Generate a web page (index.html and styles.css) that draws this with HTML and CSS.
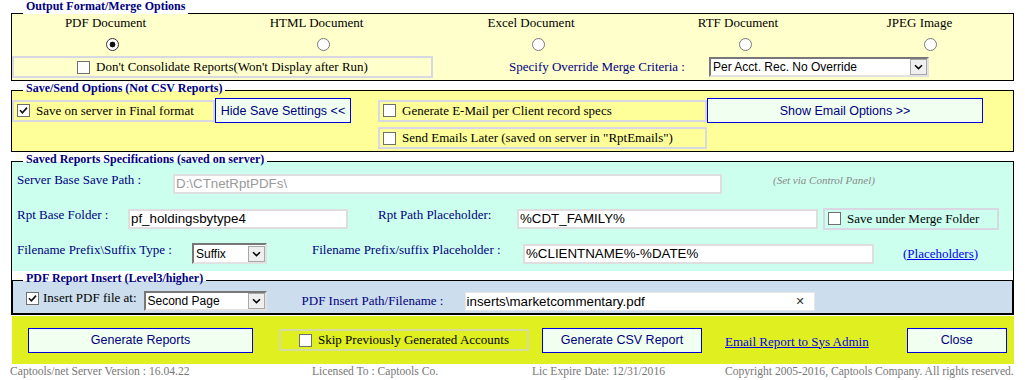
FILE: index.html
```html
<!DOCTYPE html>
<html lang="en">
<head>
  <meta charset="UTF-8">
  <meta name="viewport" content="width=device-width, initial-scale=1.0">
  <title>Report Output Options</title>
  <link rel="stylesheet" href="styles.css">
</head>
<body>

  <div class="page">

    <!-- Output Format / Merge -->
    <div class="group group-first">
      <div class="group-head"><span class="head-text">Output Format/Merge Options</span></div>
      <div class="group-body body-output">
        <div class="formats">
          <label class="fmt"><span>PDF Document</span><input type="radio" name="fmt" class="radio" checked></label>
          <label class="fmt"><span>HTML Document</span><input type="radio" name="fmt" class="radio"></label>
          <label class="fmt"><span>Excel Document</span><input type="radio" name="fmt" class="radio"></label>
          <label class="fmt"><span>RTF Document</span><input type="radio" name="fmt" class="radio"></label>
          <label class="fmt fmt-last"><span>JPEG Image</span><input type="radio" name="fmt" class="radio"></label>
        </div>
        <div class="merge-row">
          <label class="chk-box box-consolidate"><input type="checkbox" class="chk"> Don't Consolidate Reports(Won't Display after Run)</label>
          <span class="lbl merge-lbl">Specify Override Merge Criteria :</span>
          <select class="sel sel-merge">
            <option>Per Acct. Rec. No Override</option>
          </select>
        </div>
      </div>
    </div>

    <!-- Save / Send -->
    <div class="group">
      <div class="group-head"><span class="head-text">Save/Send Options (Not CSV Reports)</span></div>
      <div class="group-body body-save">
        <label class="chk-box save-final"><input type="checkbox" class="chk" checked> Save on server in Final format</label>
        <button type="button" class="btn btn-hide">Hide Save Settings &lt;&lt;</button>
        <label class="chk-box gen-mail"><input type="checkbox" class="chk"> Generate E-Mail per Client record specs</label>
        <button type="button" class="btn btn-show">Show Email Options &gt;&gt;</button>
        <label class="chk-box send-later"><input type="checkbox" class="chk"> Send Emails Later (saved on server in "RptEmails")</label>
      </div>
    </div>

    <!-- Saved Reports Specifications -->
    <div class="group">
      <div class="group-head"><span class="head-text">Saved Reports Specifications (saved on server)</span></div>
      <div class="group-body body-specs">
        <div class="specs">
          <div class="spec-row">
            <span class="lbl w-base">Server Base Save Path :</span>
            <input type="text" class="txt w-path" value="D:\CTnetRptPDFs\" disabled>
            <span class="note">(Set via Control Panel)</span>
          </div>
          <div class="spec-row">
            <span class="lbl w-folder">Rpt Base Folder :</span>
            <input type="text" class="txt w-folder-in" value="pf_holdingsbytype4">
            <span class="lbl w-ph">Rpt Path Placeholder:</span>
            <input type="text" class="txt w-ph-in" value="%CDT_FAMILY%">
            <label class="chk-box merge-folder"><input type="checkbox" class="chk"> Save under Merge Folder</label>
          </div>
          <div class="spec-row">
            <span class="lbl w-type">Filename Prefix\Suffix Type :</span>
            <select class="sel sel-suffix">
              <option>Suffix</option>
              <option>Prefix</option>
            </select>
            <span class="lbl w-fph">Filename Prefix/suffix Placeholder :</span>
            <input type="text" class="txt w-fph-in" value="%CLIENTNAME%-%DATE%">
            <a href="#" class="link ph-link">(Placeholders)</a>
          </div>
        </div>

        <!-- PDF insert -->
        <div class="group group-inner">
          <div class="group-head"><span class="head-text">PDF Report Insert (Level3/higher)</span></div>
          <div class="group-body body-pdf">
            <label class="pdf-chk"><input type="checkbox" class="chk" checked> Insert PDF file at:</label>
            <select class="sel sel-page">
              <option>Second Page</option>
              <option>First Page</option>
              <option>Last Page</option>
            </select>
            <span class="lbl w-insert">PDF Insert Path/Filename :</span>
            <div class="clear-field">
              <input type="text" class="clear-input" value="inserts\marketcommentary.pdf">
              <span class="clear-x">&#x2715;</span>
            </div>
          </div>
        </div>
      </div>
    </div>

    <!-- Actions -->
    <div class="actions">
      <button type="button" class="btn btn-gen">Generate Reports</button>
      <label class="chk-box skip-box"><input type="checkbox" class="chk"> Skip Previously Generated Accounts</label>
      <button type="button" class="btn btn-csv">Generate CSV Report</button>
      <a href="#" class="link mail-link">Email Report to Sys Admin</a>
      <button type="button" class="btn btn-close">Close</button>
    </div>
  </div>

  <div class="footer">
    <span>Captools/net Server Version : 16.04.22</span>
    <span>Licensed To : Captools Co.</span>
    <span>Lic Expire Date: 12/31/2016</span>
    <span>Copyright 2005-2016, Captools Company. All rights reserved.</span>
  </div>

</body>
</html>
```

FILE: styles.css
```css
body {
  margin: 0;
  background: #fff;
  color: #000;
  font-family: "Liberation Serif", serif;
  font-size: 13px;
}

.page {
  margin-left: 11px;
  width: 1003px;
}

/* fieldset-like groups */
.group-head {
  display: flex;
  align-items: flex-end;
  position: relative;
}
.group-head::before {
  content: "";
  flex: none;
  width: 12px;
  border-bottom: 1px solid #000;
}
.group-head::after {
  content: "";
  flex: 1;
  border-bottom: 1px solid #000;
}
.head-text {
  font: bold 12px/14px "Liberation Serif", serif;
  color: #000080;
  padding: 0 3px;
  margin-bottom: -4px;
  white-space: nowrap;
}
.group-first .head-text {
  margin-bottom: 1px;
}
.group-first .group-head {
  margin-top: -1px;
}
.group-body {
  border: 1px solid #000;
  border-top: none;
}

.lbl {
  color: #000080;
  line-height: 16px;
  white-space: nowrap;
}

/* custom controls */
.chk {
  appearance: none;
  flex: none;
  width: 13px;
  height: 13px;
  margin: 0;
  border: 1px solid #6f6f6f;
  background: #fff;
}
.chk:checked {
  background: #fff url("data:image/svg+xml,%3Csvg xmlns='http://www.w3.org/2000/svg' width='11' height='11'%3E%3Cpath d='M2 5.2l2.4 2.6L9 2.6' fill='none' stroke='%23111' stroke-width='1.6'/%3E%3C/svg%3E") no-repeat center;
}
.radio {
  appearance: none;
  width: 13px;
  height: 13px;
  margin: 8px 0 0 14px;
  border: 1px solid #7a7a7a;
  border-radius: 50%;
  background: #fff;
}
.radio:checked {
  border-color: #333;
  background: radial-gradient(circle, #111 0 2.6px, #fff 3.2px);
}

.chk-box {
  display: flex;
  align-items: center;
  gap: 6px;
  height: 22px;
  box-sizing: border-box;
  padding-left: 3px;
  border: 2px solid #d8d8e2;
  line-height: 16px;
  white-space: nowrap;
}

.sel {
  appearance: none;
  box-sizing: border-box;
  height: 20px;
  margin: 0;
  padding: 0 0 0 2px;
  font: 12px "Liberation Sans", Arial, sans-serif;
  color: #000;
  border: 2px solid;
  border-color: #777 #e2e2e2 #e2e2e2 #777;
  border-radius: 0;
  background: #fff url("data:image/svg+xml,%3Csvg xmlns='http://www.w3.org/2000/svg' width='17' height='16'%3E%3Crect x='0.5' y='0.5' width='16' height='15' fill='%23efefef' stroke='%23a8a8a8'/%3E%3Cpath d='M5 6.2l3.5 3.4L12 6.2' fill='none' stroke='%23000' stroke-width='1.5'/%3E%3C/svg%3E") no-repeat right 0 center;
}

.txt {
  box-sizing: border-box;
  height: 20px;
  margin: 0;
  padding: 0 1px;
  font: 13.33px "Liberation Sans", Arial, sans-serif;
  color: #000;
  background: #fff;
  border: 2px solid #dedede;
}
.txt:disabled {
  color: #9a9a9a;
  background: #fff;
}

.btn {
  box-sizing: border-box;
  height: 25px;
  margin: 0;
  padding: 0;
  font: 12.5px "Liberation Sans", Arial, sans-serif;
  color: #000080;
  background: #f0fff0;
  border: 1px solid #0000dd;
  cursor: pointer;
}

.link {
  color: #0000ee;
  text-decoration: underline;
  white-space: nowrap;
}

/* output format section */
.body-output {
  background: #ffffcc;
  padding-bottom: 2px;
}
.formats {
  display: grid;
  grid-template-columns: 187px 235px 194px 220px 143px;
  padding-top: 1px;
}
.fmt {
  display: flex;
  flex-direction: column;
  align-items: center;
  line-height: 16px;
}
.fmt .radio {
  margin-top: 7px;
}
.fmt-last .radio {
  margin-left: 21px;
}
.merge-row {
  display: flex;
  align-items: center;
  margin-top: 5px;
}
.box-consolidate {
  width: 421px;
  justify-content: center;
  padding-left: 0;
}
.merge-lbl {
  width: 200px;
  margin-left: 76px;
}
.sel-merge {
  width: 220px;
}

/* save/send section */
.body-save {
  background: #ffff99;
  display: grid;
  grid-template-columns: 203px 136px 27px 329px 276px;
  grid-template-rows: 25px 22px;
  row-gap: 4px;
  align-items: center;
  padding: 7px 0 2px;
}
.save-final { grid-column: 1; grid-row: 1; }
.btn-hide { grid-column: 2; grid-row: 1; }
.gen-mail { grid-column: 4; grid-row: 1; }
.btn-show { grid-column: 5; grid-row: 1; }
.send-later { grid-column: 4; grid-row: 2; }

/* saved reports section */
.body-specs {
  background: #fff;
}
.specs {
  background: #ccffee;
  padding-top: 4px;
}
.spec-row {
  display: flex;
  align-items: center;
  height: 35px;
  padding-left: 5px;
}
.spec-row .lbl {
  margin-bottom: 7px;
}
.w-base { width: 156px; }
.w-path { width: 549px; }
.note {
  margin: 0 0 8px 51px;
  font-size: 11px;
  line-height: 14px;
  font-style: italic;
  color: #8a8a8a;
}
.w-folder { width: 111px; }
.w-folder-in { width: 220px; }
.w-ph { width: 139px; margin-left: 30px; }
.w-ph-in { width: 301px; }
.merge-folder {
  width: 176px;
  margin-left: 5px;
}
.w-type { width: 175px; }
.sel-suffix {
  width: 75px;
  height: 21px;
}
.w-fph { width: 211px; margin-left: 45px; }
.w-fph-in { width: 351px; }
.ph-link { margin-left: 29px; }

/* pdf insert */
.group-inner .group-head::before {
  width: 11px;
}
.body-pdf {
  display: flex;
  align-items: center;
  box-sizing: border-box;
  height: 33px;
  padding: 8px 0 0 13px;
  background: #ccdded;
}
.pdf-chk {
  display: flex;
  align-items: center;
  gap: 4px;
  line-height: 16px;
  margin-bottom: 6px;
}
.sel-page {
  width: 123px;
  margin-left: 7px;
}
.w-insert {
  width: 163px;
  margin-left: 35px;
}
.clear-field {
  display: flex;
  align-items: center;
  box-sizing: border-box;
  width: 350px;
  height: 19px;
  background: #fff;
  border: 1px solid #e6e6e6;
}
.clear-input {
  flex: 1;
  min-width: 0;
  border: none;
  outline: none;
  padding: 0 1px;
  font: 13.33px "Liberation Sans", Arial, sans-serif;
  color: #000;
  background: transparent;
}
.clear-x {
  width: 18px;
  font: 11px "DejaVu Sans", sans-serif;
  color: #333;
}

/* bottom actions */
.actions {
  display: flex;
  align-items: center;
  box-sizing: border-box;
  width: 1002px;
  height: 48px;
  margin: 1px 0 0 1px;
  padding-left: 16px;
  background: #e0ef1f;
}
.btn-gen { width: 225px; }
.skip-box {
  width: 250px;
  margin-left: 26px;
  padding-left: 18px;
  border-color: #d6dba0;
}
.btn-csv {
  width: 160px;
  margin-left: 13px;
}
.mail-link {
  margin: 3px 0 0 23px;
  line-height: 16px;
}
.btn-close {
  width: 100px;
  margin-left: 38px;
}

/* footer */
.footer {
  display: grid;
  grid-template-columns: 302px 220px 193px auto;
  margin-left: 10px;
  font-size: 11.6px;
  line-height: 15px;
  color: #777;
  white-space: nowrap;
}
```
